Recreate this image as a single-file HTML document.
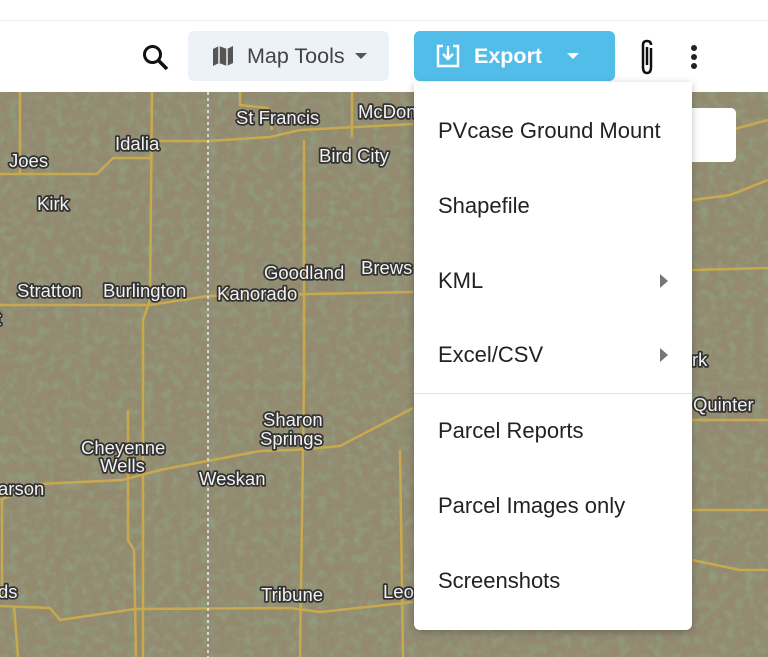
<!DOCTYPE html>
<html><head><meta charset="utf-8"><style>
html,body{margin:0;padding:0;width:768px;height:657px;overflow:hidden;background:#fff;font-family:"Liberation Sans",sans-serif}
#map{position:absolute;left:0;top:92px;width:768px;height:565px}
.hdr{position:absolute;left:0;top:0;width:768px;height:92px;background:#fff}
.hdr:before{content:"";position:absolute;left:0;top:20px;width:768px;height:1px;background:#f0f0f0}
.btn{position:absolute;top:31px;height:50px;border-radius:6px;display:flex;align-items:center;font-size:21.5px}
.menu{position:absolute;left:414px;top:82px;width:278px;height:548px;background:#fff;border-radius:0 0 6px 6px;box-shadow:0 2px 8px rgba(0,0,0,.25)}
.it{position:absolute;left:24px;font-size:22px;color:#222;line-height:26px}
.arr{position:absolute;left:246px;width:0;height:0;border-left:8px solid #777;border-top:7px solid transparent;border-bottom:7px solid transparent}
.lbl{font-family:"Liberation Sans",sans-serif;font-size:18.5px;fill:#f2f2f2;stroke:#333;stroke-width:3.5px;paint-order:stroke;stroke-linejoin:round}
</style></head><body>
<svg id="map" viewBox="0 92 768 565" width="768" height="565">
<defs><filter id="n"><feTurbulence type="fractalNoise" baseFrequency="0.11" numOctaves="3" seed="4"/><feColorMatrix values="0 0 0 0 0.28  0 0 0 0 0.36  0 0 0 0 0.22  0 0 0 2.4 -1.0"/></filter></defs>
<rect x="0" y="92" width="768" height="565" fill="#938a70"/>
<rect x="0" y="92" width="768" height="565" filter="url(#n)" opacity="0.75"/>
<g fill="none" stroke="#c9a94e" stroke-width="2.5">
<path d="M0 174 L97 174 L113 158 L150 158 M150 141 L208 141 L270 137 L300 130 L413 124"/>
<path d="M20 92 L20 175 M152 92 L150 300 L143 320 L143 657 M304 140 L304 380 L300 657 M352 92 L352 137 M240 92 L240 105 L268 108 L272 130"/>
<path d="M0 305 L150 305 L208 296 L413 292"/>
<path d="M0 500 L40 484 L122 480 L160 470 L260 451 L295 450 L340 446 L413 408"/>
<path d="M0 606 L50 608 L60 620 L135 609 L290 608 L320 612 L413 602"/>
<path d="M128 410 L128 540 L134 550 L136 657 M400 450 L403 657 M2 500 L2 600 M14 606 L18 657"/>
<path d="M692 140 L768 120 M692 200 L730 195 L768 180 M692 270 L768 268 M692 420 L768 420 M692 510 L768 510 M692 560 L740 570 L768 570"/>
</g>
<line x1="208" y1="92" x2="208" y2="657" stroke="#eee" stroke-width="1.5" stroke-dasharray="3 3"/>
<g class="lbl">
<text x="236" y="124">St Francis</text><text x="358" y="118">McDon</text>
<text x="115" y="150">Idalia</text><text x="319" y="162">Bird City</text>
<text x="9" y="167">Joes</text><text x="37" y="210">Kirk</text>
<text x="264" y="279">Goodland</text><text x="361" y="274">Brews</text>
<text x="17" y="297">Stratton</text><text x="103" y="297">Burlington</text><text x="217" y="300">Kanorado</text>
<text x="-4" y="325">t</text>
<text x="263" y="426">Sharon</text><text x="260" y="445">Springs</text>
<text x="81" y="454">Cheyenne</text><text x="100" y="472">Wells</text>
<text x="199" y="485">Weskan</text><text x="-2" y="495">arson</text>
<text x="-2" y="598">ds</text><text x="261" y="601">Tribune</text><text x="383" y="598">Leo</text>
<text x="692" y="366">rk</text><text x="693" y="411">Quinter</text>
</g>
<rect x="680" y="108" width="56" height="54" rx="5" fill="#fff"/>
</svg>
<div class="hdr">
<svg style="position:absolute;left:141px;top:43px" width="30" height="30" viewBox="0 0 30 30"><circle cx="11.5" cy="11.5" r="8" fill="none" stroke="#111" stroke-width="3"/><path d="M17 17 L26 26" stroke="#111" stroke-width="3.5"/></svg>
<div class="btn" style="left:188px;width:201px;background:#edf1f8;color:#444">
<svg style="margin-left:24px" width="22" height="22" viewBox="0 0 22 22"><path d="M1 4 L7 1 L15 4 L21 1 L21 18 L15 21 L7 18 L1 21Z" fill="#555"/><path d="M7 1 L7 18 M15 4 L15 21" stroke="#edf1f8" stroke-width="1.5"/></svg>
<span style="margin-left:13px">Map Tools</span>
<span style="margin-left:10px;border-top:6px solid #555;border-left:6px solid transparent;border-right:6px solid transparent"></span></div>
<div class="btn" style="left:414px;width:201px;background:#52bde8;color:#fff;font-weight:bold">
<svg style="margin-left:21px" width="26" height="26" viewBox="0 0 26 26"><path d="M8 3 L3 3 L3 23 L23 23 L23 3 L18 3" fill="none" stroke="#fff" stroke-width="2.4"/><path d="M13 3 L13 15 M8 11 L13 16 L18 11" fill="none" stroke="#fff" stroke-width="2.4"/></svg>
<span style="margin-left:13px">Export</span>
<span style="margin-left:25px;border-top:6px solid #fff;border-left:6px solid transparent;border-right:6px solid transparent"></span></div>
<svg style="position:absolute;left:636px;top:38px" width="22" height="38" viewBox="0 0 22 38"><path d="M15 10 L15 29 Q15 35 11 35 Q7 35 7 29 L7 7 Q7 3 11 3 Q15 3 15 7" fill="none" stroke="#111" stroke-width="2.5"/><path d="M11 9 L11 27" stroke="#111" stroke-width="2.5"/></svg>
<svg style="position:absolute;left:689px;top:44px" width="10" height="28"><circle cx="5" cy="4" r="3" fill="#222"/><circle cx="5" cy="13" r="3" fill="#222"/><circle cx="5" cy="22" r="3" fill="#222"/></svg>
</div>
<div class="menu">
<div class="it" style="top:36px">PVcase Ground Mount</div>
<div class="it" style="top:111px">Shapefile</div>
<div class="it" style="top:186px">KML</div><div class="arr" style="top:192px"></div>
<div class="it" style="top:260px">Excel/CSV</div><div class="arr" style="top:266px"></div>
<div style="position:absolute;left:0;top:311px;width:278px;height:1px;background:#e2e2e2"></div>
<div class="it" style="top:336px">Parcel Reports</div>
<div class="it" style="top:411px">Parcel Images only</div>
<div class="it" style="top:486px">Screenshots</div>
</div>
</body></html>
